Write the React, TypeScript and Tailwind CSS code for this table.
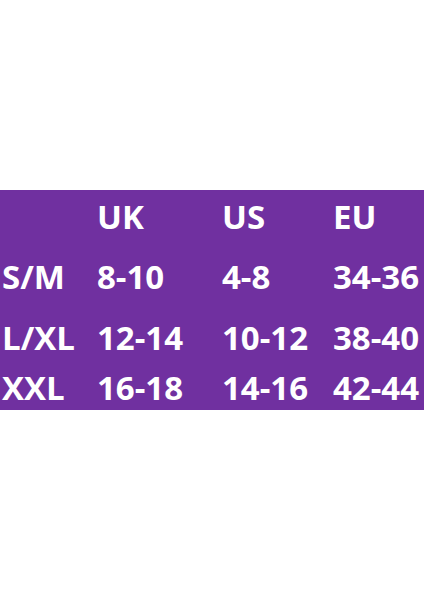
const rows = [
  { label: "", uk: "UK", us: "US", eu: "EU", mt: "mt-0" },
  { label: "S/M", uk: "8-10", us: "4-8", eu: "34-36", mt: "mt-[27px]" },
  { label: "L/XL", uk: "12-14", us: "10-12", eu: "38-40", mt: "mt-[28px]" },
  { label: "XXL", uk: "16-18", us: "14-16", eu: "42-44", mt: "mt-[17px]" },
];

export default function App() {
  return (
    <div className="h-[600px] w-[424px] bg-white pt-[190px]">
      <div
        className="h-[220px] bg-[#7030a0] pt-[10px] pl-[2px] text-white font-bold text-[33px] leading-[33px]"
        style={{ fontFamily: '"Open Sans", "Liberation Sans", sans-serif' }}
      >
        {rows.map((row) => (
          <div key={row.uk} className={`grid grid-cols-[95px_125px_111px_1fr] ${row.mt}`}>
            <span>{row.label}</span>
            <span>{row.uk}</span>
            <span>{row.us}</span>
            <span>{row.eu}</span>
          </div>
        ))}
      </div>
    </div>
  );
}
